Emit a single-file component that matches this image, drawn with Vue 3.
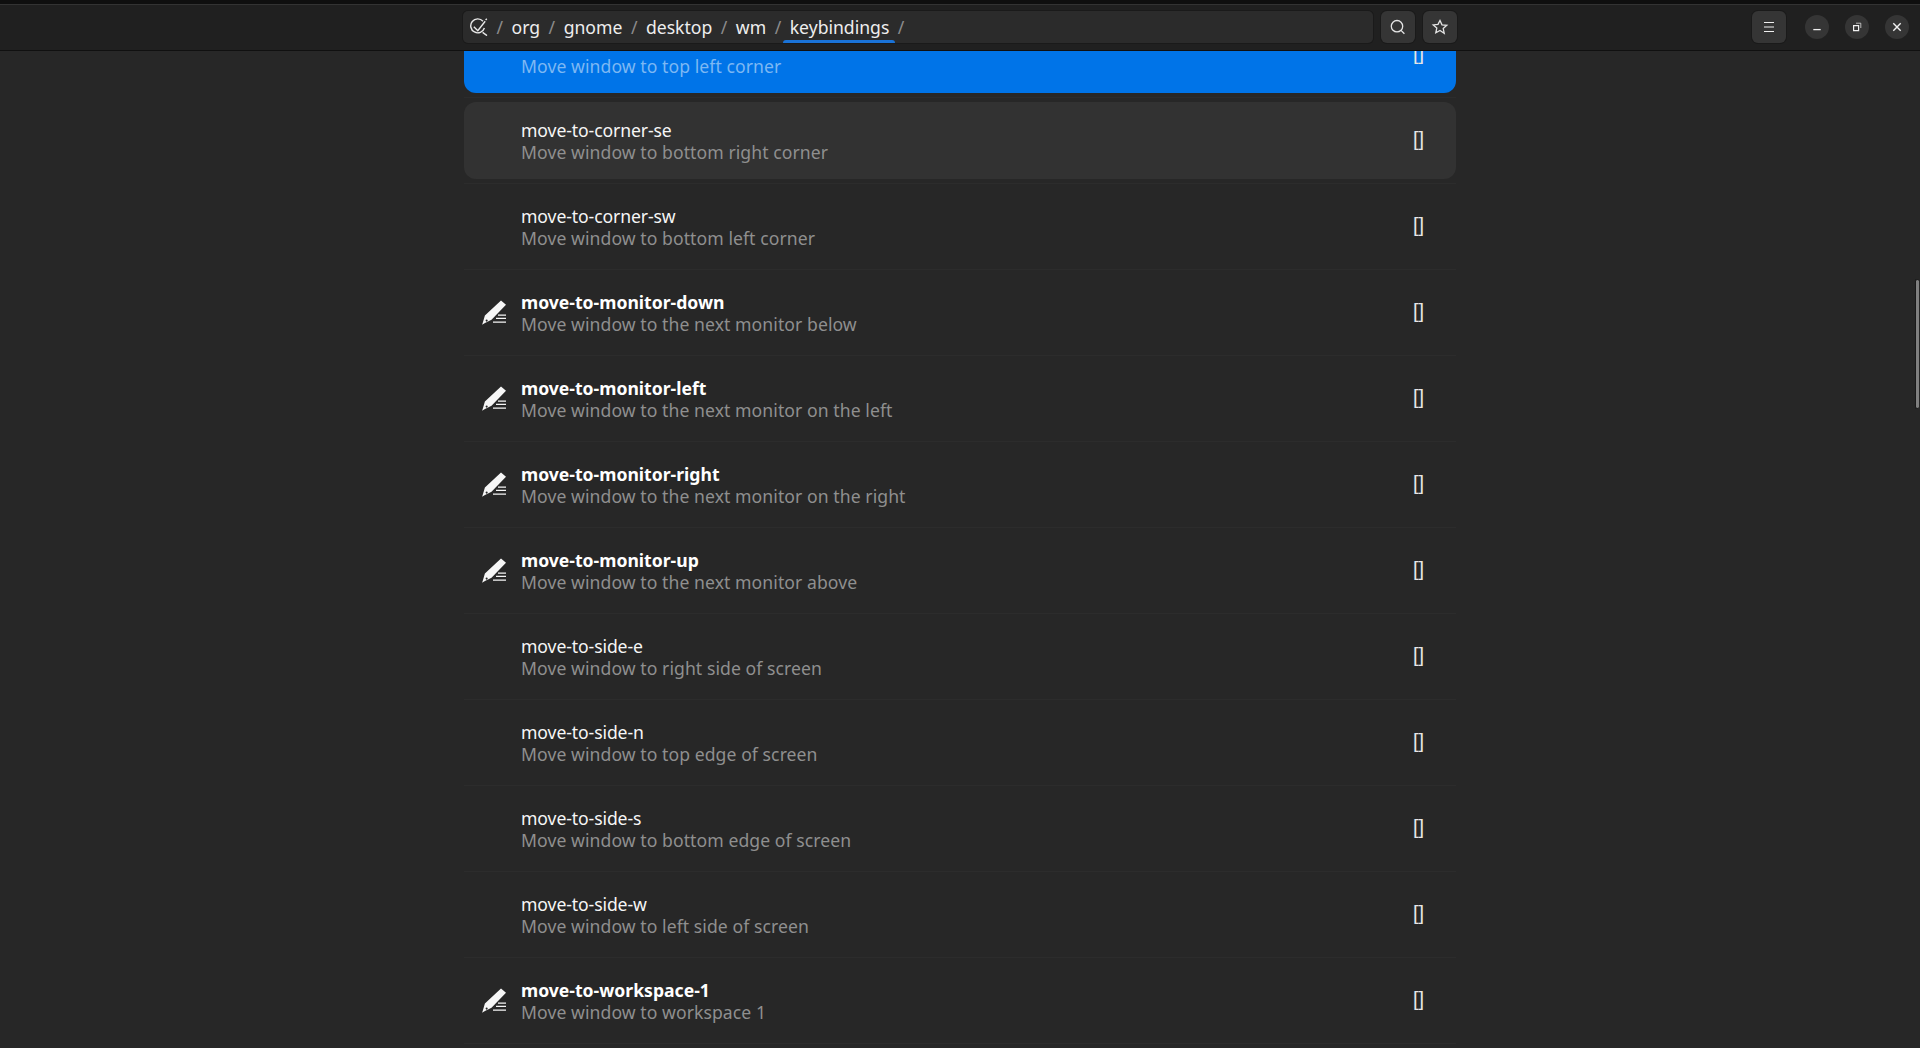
<template>
  <div class="window">
    <header class="header">
      <div class="path-bar">
        <svg class="path-icon" width="18" height="18" viewBox="0 0 18 18" fill="none" stroke="#e8e8e8" stroke-width="1.4">
          <path d="M13 3.2A7 7 0 1 0 14.4 10" />
          <path d="M3.8 8.8l4 4 7.4-9.6M12.6 14.4l4.4 3.2M15.6 2l1.2-1.2" />
        </svg>
        <template v-for="seg in segments" :key="seg">
          <span class="slash">/</span>
          <span :class="['seg', { current: seg === 'keybindings' }]">{{ seg }}</span>
        </template>
        <span class="slash">/</span>
      </div>
      <button class="head-btn">
        <svg width="18" height="18" viewBox="0 0 18 18" fill="none" stroke="#e4e4e4" stroke-width="1.3">
          <circle cx="8" cy="8.2" r="5.7" />
          <path d="M12 12.4l3.4 3.4" />
        </svg>
      </button>
      <button class="head-btn">
        <svg width="18" height="18" viewBox="0 0 18 18" fill="none" stroke="#e4e4e4" stroke-width="1.3">
          <path d="M9 2.4l2 4.4 4.8.5-3.6 3.2 1 4.7L9 12.4l-4.2 2.4 1-4.7-3.6-3.2 4.8-.5z" />
        </svg>
      </button>
      <div class="head-spacer"></div>
      <button class="head-btn">
        <svg width="16" height="16" viewBox="0 0 16 16" stroke="#f0f0f0" stroke-width="1.1">
          <path d="M3 3.5h10M3 8h10M3 12.5h10" />
        </svg>
      </button>
      <div class="win-btns">
        <button class="win-btn">
          <svg width="12" height="12" viewBox="0 0 12 12" stroke="#f0f0f0" stroke-width="1.3"><path d="M2.3 8.6h7.4" /></svg>
        </button>
        <button class="win-btn">
          <svg width="12" height="12" viewBox="0 0 12 12" fill="none" stroke="#f0f0f0" stroke-width="1.2">
            <path d="M2.6 4.6h5v5h-5z" />
            <path d="M5 2.2h4.8V7" stroke-width="0.7" />
          </svg>
        </button>
        <button class="win-btn">
          <svg width="12" height="12" viewBox="0 0 12 12" stroke="#f0f0f0" stroke-width="1.4"><path d="M2.3 2.3l7.4 7.4M9.7 2.3l-7.4 7.4" /></svg>
        </button>
      </div>
    </header>

    <main class="scroller">
      <div class="list">
        <div v-for="key in keys" :key="key.name" class="wrap">
          <div :class="['row', { selected: key.selected, hovered: key.hovered }]">
            <div class="row-icon">
              <svg v-if="key.edited" width="26" height="26" viewBox="0 0 26 26" fill="#f6f6f6">
                <path fill-rule="evenodd" d="M21 1.5l5 4.2-14.5 15-7 3.6-2.4 1.4.9-2.6 1.9-6.6zM6.6 20.4a1 1 0 1 0 .1 0z" />
                <path d="M18 15.5h8v1.2h-8zM16 18.8h10V20H16zM13 22.6h13v1.2H13z" />
              </svg>
            </div>
            <div class="row-text">
              <div :class="['name', { bold: key.edited }]">{{ key.name }}</div>
              <div class="desc">{{ key.desc }}</div>
            </div>
            <div class="value">[]</div>
          </div>
        </div>
      </div>
      <div class="scroll-thumb"></div>
    </main>
  </div>
</template>

<script setup>
const segments = ["org", "gnome", "desktop", "wm", "keybindings"];

const keys = [
  { name: "move-to-corner-nw", desc: "Move window to top left corner", selected: true },
  { name: "move-to-corner-se", desc: "Move window to bottom right corner", hovered: true },
  { name: "move-to-corner-sw", desc: "Move window to bottom left corner" },
  { name: "move-to-monitor-down", desc: "Move window to the next monitor below", edited: true },
  { name: "move-to-monitor-left", desc: "Move window to the next monitor on the left", edited: true },
  { name: "move-to-monitor-right", desc: "Move window to the next monitor on the right", edited: true },
  { name: "move-to-monitor-up", desc: "Move window to the next monitor above", edited: true },
  { name: "move-to-side-e", desc: "Move window to right side of screen" },
  { name: "move-to-side-n", desc: "Move window to top edge of screen" },
  { name: "move-to-side-s", desc: "Move window to bottom edge of screen" },
  { name: "move-to-side-w", desc: "Move window to left side of screen" },
  { name: "move-to-workspace-1", desc: "Move window to workspace 1", edited: true },
];
</script>

<style>
html,
body {
  margin: 0;
  background: #272727;
  overflow: hidden;
}
</style>

<style scoped>
.window {
  height: 1048px;
  display: flex;
  flex-direction: column;
  background: #272727;
  color: #fff;
  font-family: "Noto Sans", sans-serif;
  font-size: 17.6px;
  border-top: 4px solid #0f0f0f;
  box-sizing: border-box;
}

.header {
  height: 47px;
  flex: none;
  display: flex;
  align-items: center;
  box-sizing: border-box;
  padding: 3px 11px 4px 463px;
  background: #202020;
  border-top: 1px solid #333;
  border-bottom: 1px solid #101010;
  gap: 8px;
}

.path-bar {
  width: 910px;
  height: 32px;
  flex: none;
  display: flex;
  align-items: center;
  box-sizing: border-box;
  padding-left: 7px;
  background: #2b2b2b;
  border-radius: 5px;
  box-shadow: 0 0 0 1px #1a1a1a;
  color: #eee;
}

.path-icon {
  flex: none;
}

.slash {
  margin: 0 8.5px;
  color: #8c8c8c;
}

.seg {
  position: relative;
}

.seg.current::after {
  content: "";
  position: absolute;
  left: -7px;
  right: -6px;
  bottom: -4px;
  height: 3px;
  background: #1a73d8;
  border-radius: 3px 3px 0 0;
}

.head-btn {
  width: 34px;
  height: 32px;
  flex: none;
  padding: 0;
  display: flex;
  align-items: center;
  justify-content: center;
  background: #353535;
  border: 0;
  border-radius: 6px;
  box-shadow: 0 0 0 1px #1a1a1a;
}

.head-spacer {
  flex: 1;
}

.win-btns {
  display: flex;
  gap: 16px;
  margin-left: 11px;
}

.win-btn {
  width: 24px;
  height: 24px;
  padding: 0;
  display: flex;
  align-items: center;
  justify-content: center;
  background: #353535;
  border: 0;
  border-radius: 50%;
}

.scroller {
  position: relative;
  flex: 1;
  overflow: hidden;
}

.list {
  width: 992px;
  margin: -39px 0 0 464px;
}

.wrap {
  height: 86px;
  box-sizing: border-box;
  padding: 4px 0;
  border-bottom: 1px solid #2c2c2c;
}

.row {
  height: 77px;
  display: flex;
  align-items: center;
  border-radius: 12px;
}

.row.selected {
  background: #0074e8;
}

.row.selected .desc {
  color: #7db8f3;
}

.row.hovered {
  background: #323232;
}

.row-icon {
  width: 56px;
  flex: none;
  display: flex;
  justify-content: center;
  padding-left: 1px;
  margin-top: -2px;
}

.row-text {
  flex: 1;
  line-height: 22px;
}

.name {
  color: #f6f6f6;
  letter-spacing: -0.1px;
}

.name.bold {
  font-weight: 700;
  color: #fff;
  letter-spacing: 0;
}

.desc {
  color: #8f8f8f;
  letter-spacing: 0.07px;
}

.value {
  width: 43px;
  flex: none;
  margin-top: -2px;
  font-family: "Liberation Sans", sans-serif;
  font-size: 20px;
  color: #e6e6e6;
}

.scroll-thumb {
  position: absolute;
  top: 228px;
  right: 1px;
  width: 3px;
  height: 128px;
  background: #808080;
  border: 1px solid #1a1a1a;
  border-right: 0;
  border-radius: 2px;
}
</style>
